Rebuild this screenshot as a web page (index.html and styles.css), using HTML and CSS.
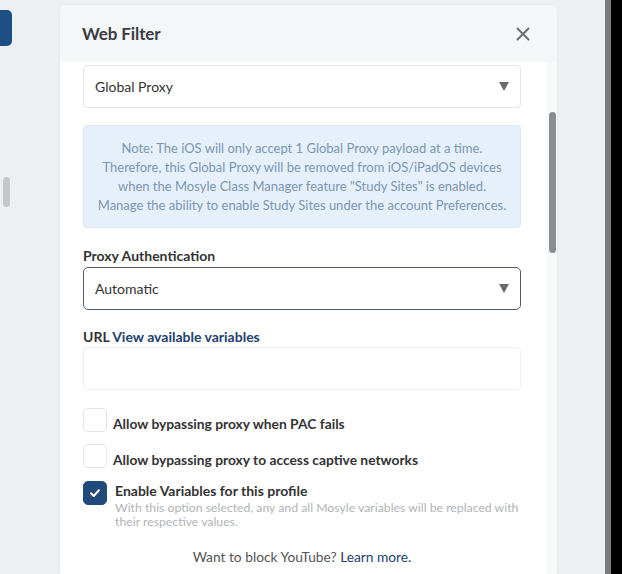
FILE: index.html
```html
<!DOCTYPE html>
<html>
<head>
<meta charset="utf-8">
<link rel="stylesheet" href="styles.css">
</head>
<body>
<div class="page">
  <div class="left-col">
    <div class="side-btn"></div>
    <div class="side-thumb"></div>
  </div>
  <div class="modal">
    <div class="modal-header">
      <h2 class="modal-title">Web Filter</h2>
      <svg class="close" width="14" height="14" viewBox="0 0 14 14"><path d="M1.5 1.5 L12.5 12.5 M12.5 1.5 L1.5 12.5" stroke="#6b6f74" stroke-width="2" stroke-linecap="round"/></svg>
    </div>
    <div class="modal-body">
      <div class="content">
        <div class="select first">
          <span>Global Proxy</span>
          <span class="caret"></span>
        </div>
        <div class="note">
          Note: The iOS will only accept 1 Global Proxy payload at a time.<br>
          Therefore, this Global Proxy will be removed from iOS/iPadOS devices<br>
          when the Mosyle Class Manager feature "Study Sites" is enabled.<br>
          Manage the ability to enable Study Sites under the account Preferences.
        </div>
        <div class="label">Proxy Authentication</div>
        <div class="select focused">
          <span>Automatic</span>
          <span class="caret"></span>
        </div>
        <div class="label url-label">URL <a class="link">View available variables</a></div>
        <div class="input"></div>
        <div class="check-row row1">
          <span class="box"></span>
          <span class="check-text">Allow bypassing proxy when PAC fails</span>
        </div>
        <div class="check-row row2">
          <span class="box"></span>
          <span class="check-text">Allow bypassing proxy to access captive networks</span>
        </div>
        <div class="check-row row3">
          <span class="box checked">
            <svg width="14" height="14" viewBox="0 0 14 14"><path d="M3 7.3 L5.8 10 L11 4.2" fill="none" stroke="#fff" stroke-width="2" stroke-linecap="round" stroke-linejoin="round"/></svg>
          </span>
          <div class="check-block">
            <span class="check-text strong">Enable Variables for this profile</span>
            <p class="help">With this option selected, any and all Mosyle variables will be replaced with their respective values.</p>
          </div>
        </div>
        <p class="footer-note">Want to block YouTube? <a class="link-plain">Learn more.</a></p>
      </div>
      <div class="scroll-track"><div class="scroll-thumb"></div></div>
    </div>
  </div>
  <div class="right-gap"></div>
  <div class="right-strip"></div>
  <div class="right-black"></div>
</div>
</body>
</html>
```
FILE: styles.css
```css
* { box-sizing: border-box; }
html, body { margin: 0; padding: 0; }
body {
  width: 622px;
  height: 574px;
  overflow: hidden;
  background: #edf0f3;
  font-family: Lato, "Open Sans", sans-serif;
  color: #333;
}
.page {
  display: flex;
  height: 574px;
}
.left-col {
  width: 60px;
  flex: none;
  display: flex;
  flex-direction: column;
}
.side-btn {
  width: 12px;
  height: 36px;
  margin-top: 10px;
  background: #1d4f82;
  border-radius: 0 5px 5px 0;
}
.side-thumb {
  width: 7px;
  height: 30px;
  margin-top: 131px;
  margin-left: 3px;
  background: #c4c8cc;
  border-radius: 4px;
}
.modal {
  width: 497px;
  flex: none;
  margin-top: 5px;
  background: #f4f6f8;
  box-shadow: 0 0 3px rgba(0,0,0,0.06);
  display: flex;
  flex-direction: column;
  border-radius: 4px 4px 0 0;
}
.modal-header {
  height: 57px;
  flex: none;
  display: flex;
  align-items: center;
  justify-content: space-between;
  padding: 0 27px 0 22px;
}
.modal-title {
  margin: 0;
  font-size: 17px;
  font-weight: 700;
  color: #3a3d41;
  letter-spacing: -0.1px;
}
.close { display: block; }
.modal-body {
  flex: 1;
  display: flex;
  min-height: 0;
}
.content {
  width: 487px;
  background: #fff;
  padding: 3px 26px 0 23px;
  display: flex;
  flex-direction: column;
}
.scroll-track {
  width: 10px;
  background: #f8f9fa;
  padding-top: 50px;
  padding-left: 2px;
}
.scroll-thumb {
  width: 7px;
  height: 141px;
  background: #8a8c8f;
  border-radius: 4px;
}
.select {
  height: 43px;
  border: 1px solid #e4e7ea;
  border-radius: 4px;
  display: flex;
  align-items: center;
  justify-content: space-between;
  padding: 0 11px 0 11px;
  font-size: 14px;
  color: #333;
}
.select.focused {
  border: 1.5px solid #4d5b78;
  border-radius: 5px;
}
.caret {
  width: 0;
  height: 0;
  border-left: 5px solid transparent;
  border-right: 5px solid transparent;
  border-top: 9px solid #6a6a6a;
}
.note {
  margin-top: 17px;
  height: 103px;
  background: #e6f0fb;
  border: 1px solid #dce8f6;
  border-radius: 4px;
  text-align: center;
  font-size: 13px;
  line-height: 19px;
  color: #7b96b3;
  padding-top: 13px;
}
.label {
  margin-top: 19px;
  font-size: 14px;
  font-weight: 700;
  line-height: 18px;
  color: #333;
  margin-bottom: 2px;
}
.label.url-label { margin-top: 18px; margin-bottom: 1px; }
.link { color: #21416e; }
.input {
  height: 43px;
  border: 1px solid #eef0f2;
  border-radius: 4px;
}
.check-row {
  display: flex;
  align-items: flex-start;
}
.row1 { margin-top: 18px; }
.row2 { margin-top: 12px; }
.row3 { margin-top: 13px; }
.box {
  width: 24px;
  height: 24px;
  flex: none;
  border: 1px solid #e2e4e7;
  border-radius: 5px;
  background: #fff;
  display: flex;
  align-items: center;
  justify-content: center;
}
.box.checked {
  background: #1f4a79;
  border-color: #1f4a79;
}
.check-text {
  font-size: 13.8px;
  font-weight: 700;
  color: #333;
  margin-left: 6px;
  margin-top: 8px;
  line-height: 16px;
}
.check-block {
  display: flex;
  flex-direction: column;
  margin-left: 8px;
}
.check-block .check-text {
  margin: 2px 0 0 0;
  font-size: 14px;
}
.help {
  margin: 2px 0 0 0;
  font-size: 12.25px;
  line-height: 14px;
  color: #b0b3b7;
}
.footer-note {
  margin: 19px 0 0 0;
  text-align: center;
  font-size: 13.75px;
  color: #555;
  line-height: 18px;
}
.link-plain { color: #21416e; }
.right-gap { width: 48px; flex: none; }
.right-strip { width: 6px; flex: none; background: #7b7b7b; }
.right-black { flex: 1; background: #000; }
```
